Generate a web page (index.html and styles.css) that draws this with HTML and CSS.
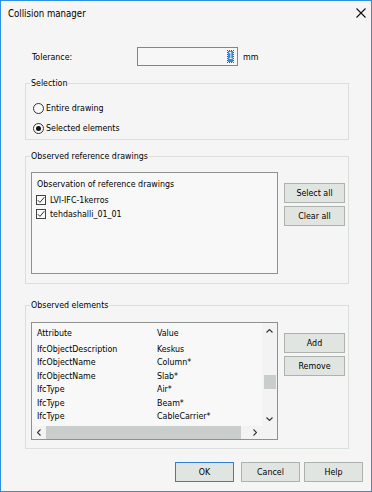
FILE: index.html
```html
<!DOCTYPE html>
<html lang="en">
<head>
    <meta charset="UTF-8">
    <title>Collision manager</title>
    <link rel="stylesheet" href="styles.css">
</head>
<body>

    <div class="window">

        <!-- Title bar -->
        <div class="titlebar">
            <span class="title">Collision manager</span>
            <svg class="close" width="10" height="10" viewBox="0 0 10 10">
                <path d="M0.5 0.5 L9.5 9.5 M9.5 0.5 L0.5 9.5" stroke="#111" stroke-width="1.1" fill="none"/>
            </svg>
        </div>

        <div class="content">

            <!-- Tolerance -->
            <div class="tolerance">
                <label class="tol-label">Tolerance:</label>
                <div class="input"><span class="selected-text">1</span></div>
                <span class="unit">mm</span>
            </div>

            <!-- Selection -->
            <fieldset class="group group-selection">
                <legend>Selection</legend>
                <div class="radio-row"><span class="radio"></span>Entire drawing</div>
                <div class="radio-row"><span class="radio checked"></span>Selected elements</div>
            </fieldset>

            <!-- Observed reference drawings -->
            <fieldset class="group group-refs">
                <legend>Observed reference drawings</legend>
                <div class="group-body">
                    <div class="listbox refs-list">
                        <div class="refs-title">Observation of reference drawings</div>
                        <div class="check-row">
                            <span class="checkbox">
                                <svg width="8" height="8" viewBox="0 0 8 8"><path d="M0.8 4.2 L3 6.4 L7.3 1.2" stroke="#333" stroke-width="1" fill="none"/></svg>
                            </span>LVI-IFC-1kerros
                        </div>
                        <div class="check-row">
                            <span class="checkbox">
                                <svg width="8" height="8" viewBox="0 0 8 8"><path d="M0.8 4.2 L3 6.4 L7.3 1.2" stroke="#333" stroke-width="1" fill="none"/></svg>
                            </span>tehdashalli_01_01
                        </div>
                    </div>
                    <div class="side-buttons">
                        <button class="btn">Select all</button>
                        <button class="btn">Clear all</button>
                    </div>
                </div>
            </fieldset>

            <!-- Observed elements -->
            <fieldset class="group group-elements">
                <legend>Observed elements</legend>
                <div class="group-body">
                    <div class="listbox elements-list">
                        <div class="rows">
                            <div class="row head"><span class="col-attr">Attribute</span><span>Value</span></div>
                            <div class="row first"><span class="col-attr">IfcObjectDescription</span><span>Keskus</span></div>
                            <div class="row"><span class="col-attr">IfcObjectName</span><span>Column*</span></div>
                            <div class="row"><span class="col-attr">IfcObjectName</span><span>Slab*</span></div>
                            <div class="row"><span class="col-attr">IfcType</span><span>Air*</span></div>
                            <div class="row"><span class="col-attr">IfcType</span><span>Beam*</span></div>
                            <div class="row"><span class="col-attr">IfcType</span><span>CableCarrier*</span></div>
                        </div>
                        <div class="vscroll">
                            <div class="sb-btn">
                                <svg width="7" height="4" viewBox="0 0 7 4"><path d="M0.5 3.5 L3.5 0.5 L6.5 3.5" stroke="#333" stroke-width="1.1" fill="none"/></svg>
                            </div>
                            <div class="vtrack"><div class="vthumb"></div></div>
                            <div class="sb-btn">
                                <svg width="7" height="4" viewBox="0 0 7 4"><path d="M0.5 0.5 L3.5 3.5 L6.5 0.5" stroke="#333" stroke-width="1.1" fill="none"/></svg>
                            </div>
                        </div>
                        <div class="hscroll">
                            <div class="sb-btn">
                                <svg width="4" height="7" viewBox="0 0 4 7"><path d="M3.5 0.5 L0.5 3.5 L3.5 6.5" stroke="#333" stroke-width="1.1" fill="none"/></svg>
                            </div>
                            <div class="hthumb"></div>
                            <div class="htrack"></div>
                            <div class="sb-btn">
                                <svg width="4" height="7" viewBox="0 0 4 7"><path d="M0.5 0.5 L3.5 3.5 L0.5 6.5" stroke="#333" stroke-width="1.1" fill="none"/></svg>
                            </div>
                        </div>
                        <div class="corner"></div>
                    </div>
                    <div class="side-buttons">
                        <button class="btn">Add</button>
                        <button class="btn">Remove</button>
                    </div>
                </div>
            </fieldset>

        </div>

        <!-- Dialog buttons -->
        <div class="footer">
            <button class="btn btn-default btn-ok">OK</button>
            <button class="btn btn-cancel">Cancel</button>
            <button class="btn">Help</button>
        </div>

    </div>

</body>
</html>
```

FILE: styles.css
```css
/* --- Base --- */
body {
    margin: 0;
    background-color: #f5f5f5;
    font-family: "DejaVu Sans Condensed", "Liberation Sans", sans-serif;
    font-size: 8.8px;
    color: #000;
}

/* --- Window frame --- */
.window {
    width: 372px;
    height: 492px;
    box-sizing: border-box;
    border: 1px solid #2f8fe0;
    background-color: #f5f5f5;
    display: flex;
    flex-direction: column;
}

.titlebar {
    height: 24px;
    display: flex;
    align-items: center;
    justify-content: space-between;
    padding: 0 5px 0 7px;
}

.title {
    font-size: 9.6px;
    color: #000;
}

.close {
    display: block;
}

/* --- Content --- */
.content {
    padding: 0 22px 0 24px;
}

.tolerance {
    display: flex;
    align-items: center;
    margin-top: 22px;
    height: 19px;
}

.tol-label {
    width: 105px;
    padding-left: 7px;
}

.input {
    width: 101px;
    height: 19px;
    box-sizing: border-box;
    border: 1px solid #4a93d8;
    background-color: #f7f7f7;
    display: flex;
    align-items: center;
    justify-content: flex-end;
    padding-right: 4px;
}

.selected-text {
    background-color: #3b86d6;
    color: #fff;
    line-height: 11px;
    width: 5px;
    text-align: center;
    outline: 1px dotted #1f5fa8;
}

.unit {
    margin-left: 5px;
}

/* --- Group boxes --- */
.group {
    margin: 0;
    border: 1px solid #dadfdb;
    padding: 0 2px 0 5px;
    min-width: 0;
}

.group legend {
    padding: 0 1px;
    margin-left: -1px;
    line-height: 13px;
}

.group-selection {
    margin-top: 11px;
    padding-top: 8px;
    padding-bottom: 1px;
}

.group-refs {
    margin-top: 10px;
    padding-top: 9px;
    padding-bottom: 9px;
}

.group-elements {
    margin-top: 15px;
    padding-top: 10px;
    padding-bottom: 8px;
}

.group-body {
    display: flex;
    align-items: flex-start;
}

/* --- Radio buttons --- */
.radio-row {
    display: flex;
    align-items: center;
    height: 20px;
}

.radio {
    width: 11px;
    height: 11px;
    box-sizing: border-box;
    border: 1px solid #333;
    border-radius: 50%;
    margin: 0 2px 0 2px;
    display: flex;
    align-items: center;
    justify-content: center;
    background-color: #fafafa;
}

.radio.checked::after {
    content: "";
    width: 5px;
    height: 5px;
    border-radius: 50%;
    background-color: #111;
}

/* --- List boxes --- */
.listbox {
    border: 1px solid #8e928f;
    background-color: #f8f8f8;
    box-sizing: border-box;
    width: 247px;
}

.refs-list {
    height: 102px;
    padding: 5px 0 0 4px;
}

.refs-title {
    line-height: 13px;
    padding-left: 1px;
    margin-bottom: 2px;
}

.check-row {
    display: flex;
    align-items: center;
    height: 14px;
}

.checkbox {
    width: 10px;
    height: 10px;
    box-sizing: border-box;
    border: 1px solid #444;
    margin-right: 4px;
    display: flex;
    align-items: center;
    justify-content: center;
    background-color: #fafafa;
}

.checkbox svg {
    display: block;
}

/* --- Side buttons --- */
.side-buttons {
    display: flex;
    flex-direction: column;
    gap: 3px;
    margin-left: 6px;
    margin-top: 11px;
}

.btn {
    font-family: inherit;
    font-size: 8.8px;
    color: #000;
    background-color: #e1e5e1;
    border: 1px solid #adb2ad;
    border-radius: 0;
    height: 20px;
    width: 61px;
    padding: 0;
    margin: 0;
}

.btn-default {
    border-color: #2f7fd2;
}

/* --- Observed elements list --- */
.elements-list {
    height: 118px;
    display: grid;
    grid-template-columns: 1fr 15px;
    grid-template-rows: 1fr 13px;
}

.rows {
    overflow: hidden;
    padding: 4px 0 0 5px;
}

.row {
    display: flex;
    line-height: 13.4px;
    white-space: nowrap;
}

.row.head {
    line-height: 13px;
}

.row.first {
    margin-top: 3px;
}

.col-attr {
    width: 120px;
}

.vscroll {
    display: flex;
    flex-direction: column;
    background-color: #f3f3f3;
}

.sb-btn {
    display: flex;
    align-items: center;
    justify-content: center;
    width: 15px;
    height: 15px;
}

.hscroll .sb-btn {
    width: 14px;
    height: 13px;
}

.vtrack {
    flex: 1;
    display: flex;
    flex-direction: column;
    align-items: center;
}

.vthumb {
    width: 12px;
    height: 14px;
    margin-top: 37px;
    background-color: #c9cdcb;
}

.hscroll {
    display: flex;
    background-color: #f3f3f3;
}

.hthumb {
    width: 195px;
    background-color: #c9cdcb;
}

.htrack {
    flex: 1;
}

.corner {
    background-color: #f3f3f3;
}

/* --- Footer --- */
.footer {
    margin-top: auto;
    display: flex;
    justify-content: flex-end;
    padding: 0 8px 9px 0;
}

.footer .btn {
    width: 59px;
    height: 20px;
}

.btn-ok {
    margin-right: 7px;
}

.btn-cancel {
    margin-right: 4px;
}
```
